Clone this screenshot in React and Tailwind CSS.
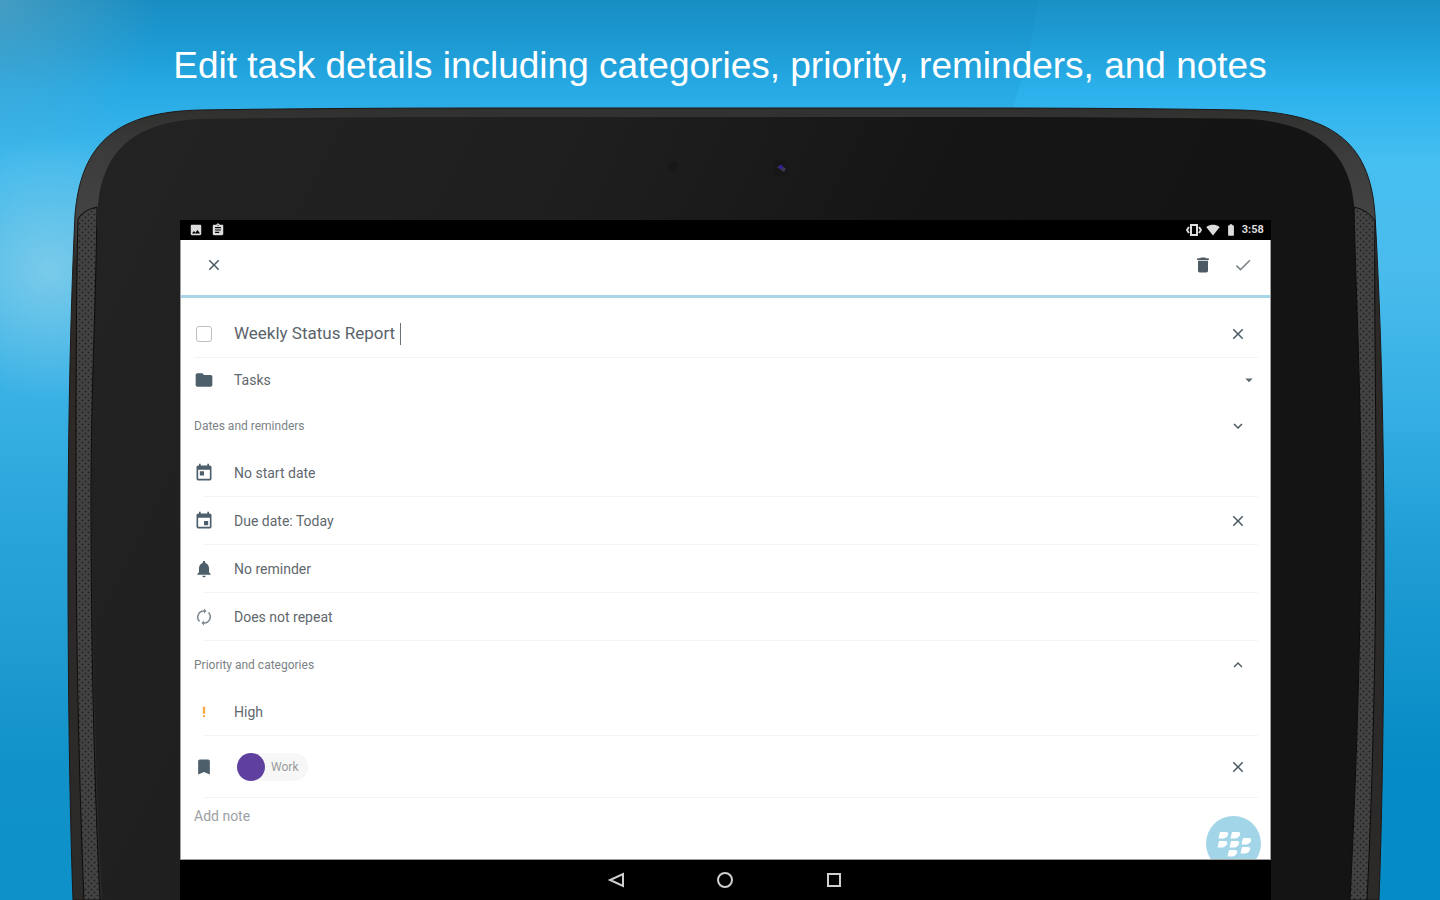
import React, { useState } from 'react';
import {
  MdClose,
  MdCheck,
  MdDelete,
  MdFolder,
  MdToday,
  MdEvent,
  MdNotifications,
  MdLoop,
  MdBookmark,
  MdArrowDropDown,
  MdKeyboardArrowDown,
  MdKeyboardArrowUp,
  MdSignalWifi4Bar,
  MdBatteryFull,
  MdImage,
  MdAssignment,
  MdPriorityHigh,
} from 'react-icons/md';

const App = () => {
  return (
    <div className="relative min-h-screen overflow-hidden bg-[#1b9bd7] font-['Liberation_Sans',Arial,sans-serif]">
      <Backdrop />
      <main className="relative flex min-h-screen flex-col">
        <h1 className="pt-[42px] text-center text-[37px] leading-[48px] whitespace-nowrap text-white">
          Edit task details including categories, priority, reminders, and notes
        </h1>
        <div className="mt-[130px] mr-[11.75%] ml-[12.5%] flex grow flex-col bg-black font-[Roboto,sans-serif]">
          <StatusBar />
          <TaskEditor />
          <NavBar />
        </div>
      </main>
    </div>
  );
};

const Backdrop = () => {
  return (
    <svg className="absolute inset-0 h-full w-full" viewBox="0 0 1440 900" preserveAspectRatio="none" aria-hidden="true">
      <defs>
        <linearGradient id="sky" x1="0" y1="0" x2="0" y2="1">
          <stop offset="0" stopColor="#1a90c4" />
          <stop offset="0.05" stopColor="#1f9fd7" />
          <stop offset="0.1" stopColor="#2bb1ec" />
          <stop offset="0.18" stopColor="#46bff1" />
          <stop offset="0.3" stopColor="#49bcec" />
          <stop offset="0.45" stopColor="#36afe4" />
          <stop offset="0.6" stopColor="#209fd6" />
          <stop offset="0.72" stopColor="#1595cd" />
          <stop offset="0.85" stopColor="#058bc5" />
          <stop offset="1" stopColor="#058bc5" />
        </linearGradient>
        <linearGradient id="shade" x1="0" y1="0" x2="0" y2="1">
          <stop offset="0" stopColor="#0a7ab5" stopOpacity="0.12" />
          <stop offset="0.25" stopColor="#0a7ab5" stopOpacity="0.12" />
          <stop offset="1" stopColor="#0a7ab5" stopOpacity="0" />
        </linearGradient>
        <linearGradient id="lift" x1="0" y1="0" x2="0" y2="1">
          <stop offset="0" stopColor="#5fc0e6" stopOpacity="0" />
          <stop offset="0.5" stopColor="#5fc0e6" stopOpacity="0.16" />
          <stop offset="1" stopColor="#5fc0e6" stopOpacity="0.1" />
        </linearGradient>
        <radialGradient id="glow" gradientUnits="userSpaceOnUse" cx="50" cy="270" r="130">
          <stop offset="0" stopColor="#86cfea" stopOpacity="0.8" />
          <stop offset="0.5" stopColor="#86cfea" stopOpacity="0.4" />
          <stop offset="1" stopColor="#86cfea" stopOpacity="0" />
        </radialGradient>
        <radialGradient id="haze" gradientUnits="userSpaceOnUse" cx="0" cy="0" r="160">
          <stop offset="0" stopColor="#6fa9c0" stopOpacity="0.5" />
          <stop offset="1" stopColor="#6fa9c0" stopOpacity="0" />
        </radialGradient>
        <linearGradient id="shell" x1="0" y1="0" x2="0" y2="1">
          <stop offset="0" stopColor="#30302f" />
          <stop offset="0.06" stopColor="#3d3c3c" />
          <stop offset="0.14" stopColor="#454444" />
          <stop offset="0.2" stopColor="#2c2927" />
          <stop offset="1" stopColor="#2c2a29" />
        </linearGradient>
        <linearGradient id="face" x1="0" y1="0" x2="1" y2="0.3">
          <stop offset="0" stopColor="#232323" />
          <stop offset="0.35" stopColor="#1f1f1f" />
          <stop offset="0.65" stopColor="#151515" />
          <stop offset="1" stopColor="#141414" />
        </linearGradient>
        <pattern id="mesh" width="6" height="6" patternUnits="userSpaceOnUse">
          <rect width="6" height="6" fill="#434343" />
          <circle cx="1.5" cy="1.5" r="1" fill="#222" />
          <circle cx="4.5" cy="4.5" r="1" fill="#222" />
        </pattern>
      </defs>
      <rect width="1440" height="900" fill="url(#sky)" />
      <path d="M0 0H1038Q1030 60 1012 110V400H0Z" fill="url(#shade)" />
      <rect width="200" height="600" y="300" fill="url(#lift)" />
      <rect width="200" height="400" y="130" fill="url(#glow)" />
      <rect width="200" height="160" fill="url(#haze)" />

      {/* tablet shell */}
      <path
        d="M73 900C70 820 68 700 68 560C68 440 70 320 75 215C81 140 120 112 200 110Q330 108 480 108H970Q1130 108 1240 110C1330 113 1370 140 1375 215C1381 320 1384 440 1384 560C1384 700 1382 820 1379 900Z"
        fill="url(#shell)"
        stroke="#1d1816"
      />
      <path
        d="M102 900C96 780 92 640 92 500C92 390 95 290 98 205C103 150 135 122 200 119Q330 117 480 117H970Q1130 117 1250 119C1320 124 1350 155 1354 205C1357 290 1361 390 1361 500C1361 640 1356 780 1350 900Z"
        fill="url(#face)"
      />

      {/* speakers */}
      <path
        d="M78 219Q83 210 97 207C96 300 91 390 91 500C91 640 94 780 100 900H84C79 780 76 640 76 500C76 400 76 300 78 219Z"
        fill="url(#mesh)"
        stroke="#0c0c0c"
      />
      <path
        d="M1375 221Q1368 210 1354 207C1356 300 1361 390 1361 500C1361 640 1356 780 1350 900H1367C1373 780 1376 640 1376 500C1376 400 1374 300 1375 221Z"
        fill="url(#mesh)"
        stroke="#0c0c0c"
      />

      {/* sensors */}
      <circle cx="673" cy="166" r="5" fill="#181818" />
      <circle cx="781" cy="168" r="8" fill="#171717" />
      <path d="M777 167L781 165L786 169L784 172Z" fill="#3b3b50" />
      <circle cx="781" cy="167" r="2" fill="#2d1f96" />
    </svg>
  );
};

const StatusBar = () => {
  return (
    <div className="flex h-5 items-center justify-between pr-[7px] pl-[9px] text-[#dcdcdc]">
      <div className="flex items-center gap-2">
        <MdImage className="h-[14px] w-[14px]" />
        <MdAssignment className="h-[14px] w-[14px]" />
      </div>
      <div className="flex items-center gap-1">
        <svg viewBox="0 0 16 16" className="h-4 w-4" fill="none" stroke="currentColor" strokeWidth="2">
          <path d="M5 3H11V13H5Z" />
          <path d="M3 5L1 8L3 11M13 5L15 8L13 11" />
        </svg>
        <MdSignalWifi4Bar className="h-[14px] w-[14px]" />
        <MdBatteryFull className="h-[14px] w-[14px]" />
        <span className="text-[11px] font-bold">3:58</span>
      </div>
    </div>
  );
};

const IconButton = ({ label, children }) => {
  return (
    <button aria-label={label} className="flex h-6 w-6 items-center justify-center text-[#4c5a63]">
      {children}
    </button>
  );
};

const TaskEditor = () => {
  const [title, setTitle] = useState('Weekly Status Report');
  const [done, setDone] = useState(false);

  return (
    <div className="relative flex flex-col overflow-hidden border-x border-b border-[#a0a0a0] bg-white text-sm text-[#5f686d]">
      <header className="flex h-[58px] items-start justify-between border-b-[3px] border-[#a9d5e9] pt-[13px] pr-[15px] pl-[21px]">
        <IconButton label="Close">
          <MdClose className="h-[18px] w-[18px]" />
        </IconButton>
        <div className="flex gap-4">
          <IconButton label="Delete task">
            <MdDelete className="h-5 w-5" />
          </IconButton>
          <IconButton label="Save task">
            <MdCheck className="h-5 w-5 text-[#7d868b]" />
          </IconButton>
        </div>
      </header>

      <div className="mr-3 ml-[13px] flex h-[60px] items-center border-b border-[#f3f3f3] pt-3">
        <input
          type="checkbox"
          aria-label="Mark task complete"
          checked={done}
          onChange={(e) => setDone(e.target.checked)}
          className="mr-[22px] ml-[2px] h-4 w-4 appearance-none rounded-[3px] border border-[#bdbdbd] checked:bg-[#4c5a63]"
        />
        <input
          type="text"
          aria-label="Task title"
          value={title}
          onChange={(e) => setTitle(e.target.value)}
          className="field-sizing-content text-[17px] text-[#5a646a] outline-none"
        />
        <span className="ml-[5px] h-[22px] w-px bg-[#6b7277]" />
        <div className="ml-auto pr-2">
          <IconButton label="Clear title">
            <MdClose className="h-[18px] w-[18px]" />
          </IconButton>
        </div>
      </div>

      <div className="mr-3 ml-[13px] flex h-11 items-center">
        <MdFolder className="h-5 w-5 text-[#4c5f6b]" />
        <select aria-label="Folder" className="ml-5 grow appearance-none outline-none">
          <option>Tasks</option>
        </select>
        <MdArrowDropDown className="h-[18px] w-[18px]" />
      </div>

      <SectionHeader title="Dates and reminders" icon={<MdKeyboardArrowDown className="h-[18px] w-[18px]" />} />
      <Row icon={<MdToday className="h-5 w-5" />} text="No start date" />
      <Row icon={<MdEvent className="h-5 w-5" />} text="Due date: Today" clearLabel="Clear due date" />
      <Row icon={<MdNotifications className="h-5 w-5" />} text="No reminder" />
      <Row icon={<RepeatIcon />} text="Does not repeat" />

      <SectionHeader title="Priority and categories" icon={<MdKeyboardArrowUp className="h-[18px] w-[18px]" />} />
      <Row icon={<MdPriorityHigh className="h-[14px] w-5 text-[#f5a93c]" />} text="High" />
      <div className="relative flex h-[62px] items-center pr-5 pl-[13px]">
        <MdBookmark className="h-5 w-5 text-[#4c5f6b]" />
        <button className="ml-[23px] flex h-7 items-center gap-[6px] rounded-full bg-[#f7f7f7] pr-[10px] text-xs text-[#9a9a9a]">
          <span className="h-7 w-7 rounded-full bg-[#5f409f]" />
          Work
        </button>
        <div className="ml-auto">
          <IconButton label="Remove category">
            <MdClose className="h-[18px] w-[18px]" />
          </IconButton>
        </div>
        <Divider />
      </div>

      <div className="flex h-[61px] items-start pt-2 pl-[13px]">
        <input type="text" aria-label="Note" placeholder="Add note" className="grow outline-none placeholder:text-[#9da1a4]" />
      </div>

      <button
        aria-label="BlackBerry"
        className="absolute right-[9px] -bottom-3 h-[55px] w-[55px] rounded-full bg-[#a3d5e8]"
      >
        <BerryLogo />
      </button>
    </div>
  );
};

const Divider = () => <span className="absolute right-3 bottom-0 left-[23px] h-px bg-[#f3f3f3]" />;

const SectionHeader = ({ title, icon }) => {
  return (
    <div className="flex h-[47px] items-center justify-between pr-5 pl-[13px]">
      <h2 className="text-xs text-[#7b8286]">{title}</h2>
      <IconButton label={title}>{icon}</IconButton>
    </div>
  );
};

const Row = ({ icon, text, clearLabel }) => {
  return (
    <div className="relative flex h-12 items-center pr-5 pl-[13px]">
      <button className="flex h-full grow items-center gap-5 text-left">
        <span className="text-[#4c5f6b]">{icon}</span>
        {text}
      </button>
      {clearLabel && (
        <IconButton label={clearLabel}>
          <MdClose className="h-[18px] w-[18px]" />
        </IconButton>
      )}
      <Divider />
    </div>
  );
};

const RepeatIcon = () => {
  return (
    <svg viewBox="0 0 20 20" className="h-5 w-5" fill="none" stroke="#7b868d" strokeWidth="1.5">
      <path d="M5.5 14.5A6.2 6.2 0 0 1 10 4M14.5 5.5A6.2 6.2 0 0 1 10 16" />
      <path d="M10 1.5L12.5 4L10 6.5ZM10 13.5L7.500 16L10 18.500Z" fill="#7b868d" stroke="none" />
    </svg>
  );
};

const BerryLogo = () => {
  return (
    <svg viewBox="0 0 55 55" className="h-full w-full" fill="#fff">
      <path d="M14 16h6q3 0 2 3t-4 3.500h-5.500zM26 16h6q3 0 2 3t-4 3.500h-5.500z" />
      <path d="M13 25h6q3 0 2 3t-4 3.500h-5.500zM25 25h6q3 0 2 3t-4 3.500h-5.500zM37 22h6q3 0 2 3t-4 3.500h-5.500z" />
      <path d="M23 34h6q3 0 2 3t-4 3.500h-5.500zM36 31h6q3 0 2 3t-4 3.500h-5.500z" />
    </svg>
  );
};

const NavBar = () => {
  return (
    <nav className="flex h-10 items-center justify-center gap-[85px] text-[#cfcfcf]">
      <button aria-label="Back">
        <svg viewBox="0 0 24 24" className="h-6 w-6" fill="none" stroke="currentColor" strokeWidth="2">
          <path d="M19 6V18L6 12Z" />
        </svg>
      </button>
      <button aria-label="Home">
        <svg viewBox="0 0 24 24" className="h-6 w-6" fill="none" stroke="currentColor" strokeWidth="2">
          <circle cx="12" cy="12" r="7" />
        </svg>
      </button>
      <button aria-label="Recent apps">
        <svg viewBox="0 0 24 24" className="h-6 w-6" fill="none" stroke="currentColor" strokeWidth="2">
          <path d="M6 6H18V18H6Z" />
        </svg>
      </button>
    </nav>
  );
};

export default App;
